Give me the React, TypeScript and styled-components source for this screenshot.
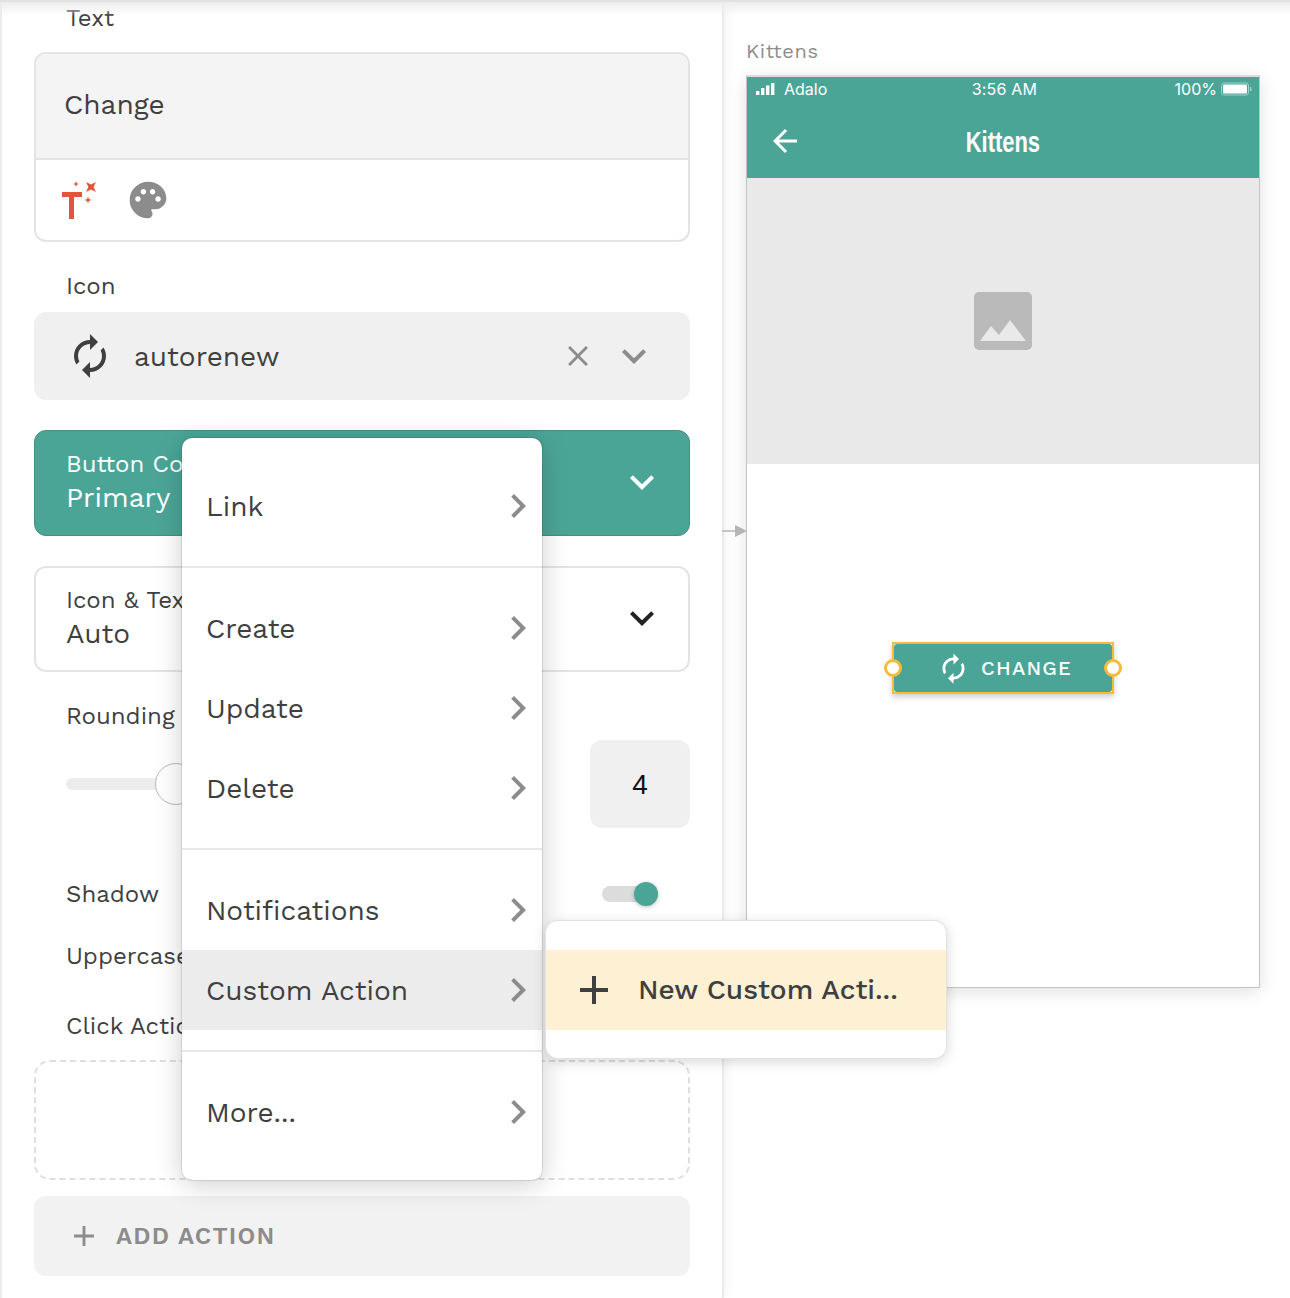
import { FC, ReactNode } from 'react'
import styled, { createGlobalStyle } from 'styled-components'
import {
  MdAdd,
  MdArrowBack,
  MdAutorenew,
  MdChevronRight,
  MdClose,
  MdExpandMore,
  MdPalette,
} from 'react-icons/md'

const teal = '#4ba597'
const ink = '#3f3f3f'
const font = '"Work Sans", Inter, "Open Sans", sans-serif'

const GlobalStyle = createGlobalStyle`
  html, body { margin: 0; padding: 0; background: #fff; }
  * { box-sizing: border-box; }
`

const menuGroups = [
  { height: 130, top: 28, items: ['Link'] },
  { height: 282, top: 20, items: ['Create', 'Update', 'Delete'] },
  { height: 202, top: 20, items: ['Notifications', 'Custom Action'] },
  { height: 128, top: 20, items: ['More...'] },
]

const MagicTextIcon = () => (
  <svg width="38" height="40" viewBox="0 0 38 40">
    <path d="M2 12h20v5h-8v22H9V17H2z" fill="#e0563b" />
    <path d="M26 2l5 2.4L36 2l-2.4 5L36 12l-5-2.4L26 12l2.4-5z" fill="#e0563b" />
    <path d="M16 1l.8 2.2L19 4l-2.2.8L16 7l-.8-2.2L13 4l2.2-.8z" fill="#e0563b" />
    <path d="M28 16.5l.9 2.6 2.6.9-2.6.9-.9 2.6-.9-2.6-2.6-.9 2.6-.9z" fill="#e0563b" />
  </svg>
)

const ImagePlaceholder = () => (
  <svg width="58" height="58" viewBox="0 0 58 58">
    <rect width="58" height="58" rx="5" fill="#bababa" />
    <path d="M6 49l11-15 8 9 11-15 16 21z" fill="#e9e9e9" />
  </svg>
)

const SignalIcon = () => (
  <svg width="20" height="14" viewBox="0 0 20 14">
    <rect x="0" y="9" width="3.4" height="4" fill="#fff" />
    <rect x="5" y="6" width="3.4" height="7" fill="#fff" />
    <rect x="10" y="3.5" width="3.4" height="9.5" fill="#fff" />
    <rect x="15" y="1" width="3.4" height="12" fill="#fff" />
  </svg>
)

const BatteryIcon = () => (
  <svg width="32" height="14" viewBox="0 0 32 14">
    <rect x="0.5" y="1" width="27" height="12" rx="2.5" fill="none" stroke="#a5d2cb" />
    <rect x="2" y="2.5" width="24" height="9" rx="1.2" fill="#fff" />
    <rect x="29" y="5" width="1.4" height="4" fill="#a5d2cb" />
  </svg>
)

const MenuRow: FC<{ label: string }> = ({ label }) => (
  <MenuItem $active={label === 'Custom Action'}>
    {label}
    <MdChevronRight size={48} color="#8c8c8c" />
  </MenuItem>
)

const Field: FC<{ children: ReactNode }> = ({ children }) => <FieldLabel>{children}</FieldLabel>

export default function App() {
  return (
    <Page>
      <GlobalStyle />
      <SidePanel>
        <TopLabel>Text</TopLabel>
        <TextCard>
          <TextValue>Change</TextValue>
          <TextTools>
            <MagicTextIcon />
            <MdPalette size={44} color="#8c8c8c" />
          </TextTools>
        </TextCard>

        <IconLabel>Icon</IconLabel>
        <IconSelect>
          <MdAutorenew size={48} color={ink} />
          <IconName>autorenew</IconName>
          <MdClose size={34} color="#8c8c8c" />
          <MdExpandMore size={48} color="#8c8c8c" />
        </IconSelect>

        <ColorSelect>
          <div>
            <SelectCaption>Button Color</SelectCaption>
            <SelectValue>Primary</SelectValue>
          </div>
          <MdExpandMore size={48} color="#fff" />
        </ColorSelect>

        <StyleSelect>
          <div>
            <SelectCaption>Icon &amp; Text Color</SelectCaption>
            <SelectValue>Auto</SelectValue>
          </div>
          <MdExpandMore size={48} color="#222" />
        </StyleSelect>

        <Field>Rounding</Field>
        <SliderRow>
          <SliderTrack>
            <SliderKnob />
          </SliderTrack>
          <NumberBox>4</NumberBox>
        </SliderRow>

        <ShadowRow>
          <FieldLabel>Shadow</FieldLabel>
          <Toggle>
            <ToggleKnob />
          </Toggle>
        </ShadowRow>
        <UppercaseLabel>Uppercase</UppercaseLabel>
        <ClickLabel>Click Actions</ClickLabel>
        <DropZone />
        <AddAction>
          <MdAdd size={34} color="#8c8c8c" />
          ADD ACTION
        </AddAction>
      </SidePanel>

      <Canvas>
        <ScreenName>Kittens</ScreenName>
        <Phone>
          <StatusBar>
            <StatusSide>
              <SignalIcon />
              Adalo
            </StatusSide>
            <StatusTime>3:56 AM</StatusTime>
            <StatusRight>
              100%
              <BatteryIcon />
            </StatusRight>
          </StatusBar>
          <AppBar>
            <MdArrowBack size={36} color="#fff" />
            <AppTitle>Kittens</AppTitle>
          </AppBar>
          <ImageArea>
            <ImagePlaceholder />
          </ImageArea>
          <ScreenBody>
            <PhoneButton>
              <Handle $side="left" />
              <ButtonFace>
                <MdAutorenew size={33} color="#fff" />
                CHANGE
              </ButtonFace>
              <Handle $side="right" />
            </PhoneButton>
          </ScreenBody>
        </Phone>
      </Canvas>

      <TopShade />
      <Connector>
        <svg width="26" height="14" viewBox="0 0 26 14">
          <path d="M0 7h14" stroke="#b5b5b5" strokeWidth="1.5" />
          <path d="M13 1l12 6-12 6z" fill="#b5b5b5" />
        </svg>
      </Connector>

      <Menu>
        {menuGroups.map((group) => (
          <MenuGroup key={group.items[0]} $height={group.height} $top={group.top}>
            {group.items.map((item) => (
              <MenuRow key={item} label={item} />
            ))}
          </MenuGroup>
        ))}
      </Menu>

      <SubMenu>
        <SubMenuItem>
          <MdAdd size={48} color={ink} />
          New Custom Acti...
        </SubMenuItem>
      </SubMenu>
    </Page>
  )
}

const Page = styled.div`
  position: relative;
  display: flex;
  width: 1290px;
  height: 1298px;
  overflow: hidden;
  background: #fff;
  font-family: ${font};
  color: ${ink};
`

const TopShade = styled.div`
  position: absolute;
  top: 0;
  left: 0;
  right: 0;
  height: 16px;
  border-top: 2px solid #e2e2e2;
  background: linear-gradient(#ededed, rgba(255, 255, 255, 0));
  pointer-events: none;
`

const SidePanel = styled.aside`
  display: flex;
  flex-direction: column;
  flex: none;
  width: 724px;
  height: 100%;
  padding: 0 32px 0 32px;
  border-left: 2px solid #ebebeb;
  border-right: 2px solid #ebebeb;
  box-shadow: 0 0 12px rgba(0, 0, 0, 0.07);
`

const FieldLabel = styled.div`
  padding-left: 32px;
  font-size: 24px;
  line-height: 30px;
  white-space: nowrap;
`

const TopLabel = styled(FieldLabel)`
  margin-top: 3px;
`

const TextCard = styled.section`
  margin-top: 19px;
  height: 190px;
  border: 2px solid #e4e4e4;
  border-radius: 12px;
  overflow: hidden;
`

const TextValue = styled.div`
  display: flex;
  align-items: center;
  height: 106px;
  padding: 0 0 4px 28px;
  background: #f4f4f4;
  border-bottom: 2px solid #e4e4e4;
  font-size: 28px;
`

const TextTools = styled.div`
  display: flex;
  align-items: center;
  gap: 28px;
  height: 80px;
  padding-left: 24px;
`

const IconLabel = styled(FieldLabel)`
  margin-top: 29px;
`

const IconSelect = styled.div`
  display: flex;
  align-items: center;
  margin-top: 11px;
  height: 88px;
  padding: 0 32px 0 32px;
  background: #f0f0f0;
  border-radius: 12px;

  svg:nth-of-type(2) {
    margin-right: 15px;
  }
`

const IconName = styled.span`
  flex: 1;
  margin-left: 20px;
  font-size: 28px;
`

const SelectBase = styled.div`
  display: flex;
  align-items: center;
  justify-content: space-between;
  height: 106px;
  border-radius: 12px;

  svg {
    margin-bottom: 2px;
  }
`

const ColorSelect = styled(SelectBase)`
  margin-top: 30px;
  padding: 0 23px 0 31px;
  background: ${teal};
  border: 1px solid #45907f;
  color: #fff;
`

const StyleSelect = styled(SelectBase)`
  margin-top: 30px;
  margin-bottom: 29px;
  padding: 0 22px 0 30px;
  background: #fff;
  border: 2px solid #e4e4e4;
`

const SelectCaption = styled.div`
  font-size: 24px;
  line-height: 30px;
  white-space: nowrap;
`

const SelectValue = styled.div`
  font-size: 28px;
  line-height: 38px;
`

const SliderRow = styled.div`
  display: flex;
  align-items: center;
  justify-content: space-between;
  margin-top: 9px;
  height: 88px;
  padding-left: 32px;
`

const SliderTrack = styled.div`
  position: relative;
  width: 420px;
  height: 12px;
  background: #ececec;
  border-radius: 6px;
`

const SliderKnob = styled.div`
  position: absolute;
  left: 89px;
  top: -15px;
  width: 42px;
  height: 42px;
  background: #fff;
  border: 1px solid #b9b9b9;
  border-radius: 50%;
`

const NumberBox = styled.div`
  display: flex;
  align-items: center;
  justify-content: center;
  width: 100px;
  height: 88px;
  padding-top: 2px;
  background: #f0f0f0;
  border-radius: 12px;
  color: #111;
  font-family: 'Liberation Sans', Arial, sans-serif;
  font-size: 28px;
`

const ShadowRow = styled.div`
  display: flex;
  align-items: center;
  justify-content: space-between;
  margin-top: 51px;
  padding-right: 32px;
`

const Toggle = styled.div`
  position: relative;
  width: 56px;
  height: 16px;
  background: #dcdcdc;
  border-radius: 8px;
`

const ToggleKnob = styled.div`
  position: absolute;
  right: 0;
  top: -4px;
  width: 24px;
  height: 24px;
  background: ${teal};
  border-radius: 50%;
  box-shadow: 0 1px 4px rgba(0, 0, 0, 0.25);
`

const UppercaseLabel = styled(FieldLabel)`
  margin-top: 32px;
`

const ClickLabel = styled(FieldLabel)`
  margin-top: 40px;
`

const DropZone = styled.div`
  margin-top: 19px;
  height: 120px;
  border: 2px dashed #dedede;
  border-radius: 16px;
`

const AddAction = styled.div`
  display: flex;
  align-items: center;
  gap: 15px;
  margin-top: 16px;
  height: 80px;
  padding-left: 33px;
  background: #f2f2f2;
  border-radius: 12px;
  color: #8c8c8c;
  font-size: 24px;
  font-weight: 600;
  letter-spacing: 1.2px;
`

const Canvas = styled.main`
  flex: 1;
  padding: 39px 30px 0 22px;
`

const ScreenName = styled.div`
  font-size: 20px;
  line-height: 25px;
  letter-spacing: 0.6px;
  color: #8c8c8c;
`

const Phone = styled.div`
  display: flex;
  flex-direction: column;
  margin-top: 11px;
  width: 514px;
  height: 913px;
  border: 1px solid #c4c4c4;
  border-top: 2px solid #dcdcdc;
  background: #fff;
  box-shadow: 0 4px 18px rgba(0, 0, 0, 0.12);
`

const StatusBar = styled.div`
  display: grid;
  grid-template-columns: 1fr auto 1fr;
  align-items: center;
  flex: none;
  height: 26px;
  padding: 0 6px 2px 9px;
  background: ${teal};
  color: #fff;
  font-family: Inter, sans-serif;
  font-size: 16px;
`

const StatusSide = styled.div`
  display: flex;
  align-items: center;
  gap: 8px;
`

const StatusTime = styled.div`
  letter-spacing: 0.2px;
`

const StatusRight = styled(StatusSide)`
  justify-content: flex-end;
  gap: 4px;
`

const AppBar = styled.div`
  position: relative;
  display: flex;
  align-items: center;
  justify-content: center;
  flex: none;
  height: 75px;
  background: ${teal};

  svg {
    position: absolute;
    left: 20px;
    top: 20px;
  }
`

const AppTitle = styled.h1`
  margin: 3px 0 0;
  color: #fff;
  font-family: 'Liberation Sans Narrow', 'Liberation Sans', sans-serif;
  font-size: 30px;
  font-weight: 700;
  transform: scaleX(0.73);
`

const ImageArea = styled.div`
  display: flex;
  align-items: center;
  justify-content: center;
  flex: none;
  height: 286px;
  background: #e9e9e9;
`

const ScreenBody = styled.div`
  display: flex;
  justify-content: center;
  padding-top: 178px;
`

const PhoneButton = styled.div`
  position: relative;
  width: 222px;
  height: 52px;
  border: 2px solid #f6bb3a;
  box-shadow: 0 3px 6px rgba(0, 0, 0, 0.2);
`

const ButtonFace = styled.div`
  display: flex;
  align-items: center;
  justify-content: center;
  gap: 11px;
  height: 100%;
  padding-left: 3px;
  background: ${teal};
  border-radius: 3px;
  color: #fff;
  font-size: 20px;
  font-weight: 500;
  letter-spacing: 1.2px;
`

const Handle = styled.span<{ $side: 'left' | 'right' }>`
  position: absolute;
  top: 15px;
  ${(p) => (p.$side === 'left' ? 'left: -10px;' : 'right: -10px;')}
  width: 18px;
  height: 18px;
  background: #fff;
  border: 3px solid #f6bb3a;
  border-radius: 50%;
  z-index: 1;
`

const Connector = styled.div`
  position: absolute;
  left: 722px;
  top: 524px;
  display: flex;
`

const Menu = styled.nav`
  position: absolute;
  left: 182px;
  top: 438px;
  width: 360px;
  height: 742px;
  background: #fff;
  border-radius: 10px;
  box-shadow: 0 0 0 1px rgba(0, 0, 0, 0.1), 0 4px 28px rgba(0, 0, 0, 0.2);
  overflow: hidden;
`

const MenuGroup = styled.div<{ $height: number; $top: number }>`
  display: flex;
  flex-direction: column;
  height: ${(p) => p.$height}px;
  padding-top: ${(p) => p.$top}px;
  border-bottom: 2px solid #e8e8e8;

  &:last-child {
    border-bottom: 0;
  }
`

const MenuItem = styled.div<{ $active: boolean }>`
  display: flex;
  align-items: center;
  justify-content: space-between;
  flex: none;
  height: 80px;
  padding: 0 0 0 24px;
  background: ${(p) => (p.$active ? '#ececec' : '#fff')};
  font-size: 28px;
`

const SubMenu = styled.div`
  position: absolute;
  left: 546px;
  top: 921px;
  display: flex;
  align-items: center;
  width: 400px;
  height: 137px;
  background: #fff;
  border-radius: 12px;
  box-shadow: 0 0 0 1px #e2e2e2, 0 3px 14px rgba(0, 0, 0, 0.18);
`

const SubMenuItem = styled.div`
  display: flex;
  align-items: center;
  gap: 20px;
  width: 100%;
  height: 80px;
  padding-left: 24px;
  background: #fdf0d3;
  font-size: 28px;
  font-weight: 500;
  white-space: nowrap;
`
